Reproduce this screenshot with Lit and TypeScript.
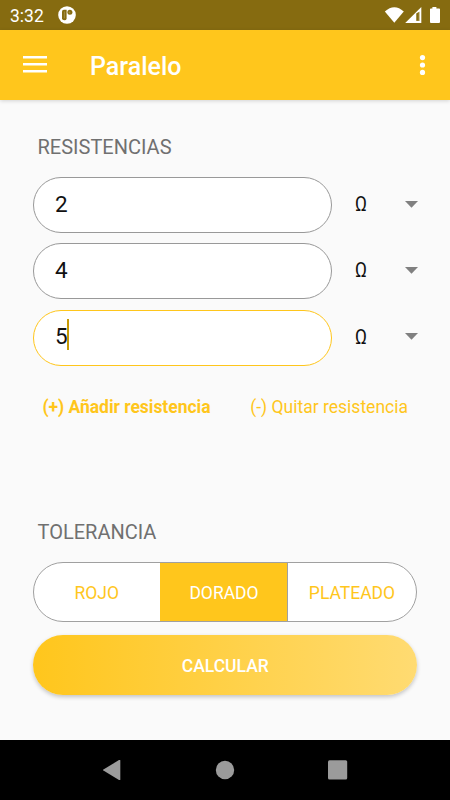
import { LitElement, html, css, svg } from "lit";
import { customElement, state } from "lit/decorators.js";
import { classMap } from "lit/directives/class-map.js";

@customElement("status-bar")
class StatusBar extends LitElement {
  static styles = css`
    :host {
      display: flex;
      align-items: center;
      height: 30px;
      background: #866b10;
      color: #fff;
      box-sizing: border-box;
      padding: 0 10px;
    }
    .clock {
      font: 400 17.5px/32px Roboto, sans-serif;
      width: 48px;
      height: 30px;
    }
    .spacer {
      flex: 1;
    }
    svg {
      display: block;
    }
  `;
  render() {
    return html`
      <span class="clock">3:32</span>
      <svg width="18" height="18" viewBox="0 0 18 18">
        <circle cx="9" cy="9" r="8.8" fill="#fff" />
        <path d="M4 5.6Q4 3.8 5.8 3.8H8.6V12.4Q8.6 14.3 6.3 14.3Q4 14.3 4 12.2Z" fill="#866b10" />
        <path d="M5.9 5.6H6.9V12.3H5.9Z" fill="#a18b45" />
        <circle cx="11.9" cy="6.3" r="2.5" fill="#866b10" />
        <circle cx="11.5" cy="6.4" r="0.9" fill="#a18b45" />
      </svg>
      <span class="spacer"></span>
      <svg width="56" height="18" viewBox="0 0 56 18">
        <path d="M0.8 5.6Q10.3 -3.2 19.8 5.6L10.3 16.8Z" fill="#fff" />
        <path d="M21.2 17L37.3 1V17Z" fill="#fff" />
        <path d="M32.2 7.4L35.9 5.4V15.1H32.2Z" fill="#c9bd93" />
        <path d="M32.4 7.4L34.8 6V14.7H32.4Z" fill="#866b10" />
        <path d="M48.4 1H52.4V2.4H55.2Q56 2.4 56 3.3V16Q56 17 55 17H47Q46 17 46 16V3.3Q46 2.4 46.9 2.4H48.4Z" fill="#fff" />
      </svg>
    `;
  }
}

@customElement("tool-bar")
class ToolBar extends LitElement {
  static styles = css`
    :host {
      display: flex;
      align-items: center;
      height: 70px;
      box-sizing: border-box;
      padding: 0 23px;
      background: #ffc61c;
      color: #fff;
      box-shadow: 0 1px 4px rgba(0, 0, 0, 0.16);
    }
    .title {
      flex: 1;
      margin: 4px 0 0 43px;
      font: 500 25px/30px Roboto, sans-serif;
    }
    svg {
      display: block;
    }
    .menu {
      margin-bottom: 1px;
    }
  `;
  render() {
    return html`
      <svg class="menu" width="24" height="17" viewBox="0 0 24 17">
        <path d="M0 0H24V2.6H0ZM0 7H24V9.6H0ZM0 14H24V16.6H0Z" fill="#fff" />
      </svg>
      <span class="title">Paralelo</span>
      <svg class="more" width="9" height="20" viewBox="0 0 9 20">
        <circle cx="4.5" cy="2.6" r="2.6" fill="#fff" />
        <circle cx="4.5" cy="10" r="2.6" fill="#fff" />
        <circle cx="4.5" cy="17.4" r="2.6" fill="#fff" />
      </svg>
    `;
  }
}

@customElement("nav-bar")
class NavBar extends LitElement {
  static styles = css`
    :host {
      display: grid;
      grid-template-columns: repeat(3, 112.5px);
      justify-content: center;
      align-items: center;
      justify-items: center;
      height: 60px;
      background: #000;
    }
    svg {
      display: block;
    }
  `;
  render() {
    const shapes = [
      svg`<path d="M0.4 9.4Q-0.5 10 0.4 10.6L16 19.9Q17.3 20.4 17.3 19.4V0.6Q17.3 -0.4 16 0.1Z" />`,
      svg`<circle cx="10" cy="10" r="9.2" />`,
      svg`<rect x="0" y="0.3" width="19.2" height="19.2" rx="1.5" />`,
    ];
    return shapes.map(
      (shape) => html`<svg width="20" height="20" viewBox="0 0 20 20" fill="#9b9b9b">${shape}</svg>`
    );
  }
}

@customElement("app-root")
class AppRoot extends LitElement {
  @state() values = ["2", "4", "5"];
  @state() focused = 2;
  @state() tolerance = "DORADO";

  static styles = css`
    :host {
      display: flex;
      flex-direction: column;
      width: 450px;
      height: 800px;
      background: #fafafa;
      font-family: Roboto, sans-serif;
      overflow: hidden;
    }
    main {
      flex: 1;
      display: flex;
      flex-direction: column;
      padding: 0 32.5px;
    }
    .label {
      font-size: 20px;
      line-height: 24px;
      color: #707070;
      padding-left: 5px;
    }
    .label.first {
      margin-top: 35px;
    }
    .label.second {
      margin-top: 103.5px;
    }
    .rows {
      display: grid;
      gap: 10.25px;
      margin-top: 18px;
    }
    .row {
      display: flex;
      align-items: center;
    }
    .field {
      box-sizing: border-box;
      width: 299.5px;
      height: 56px;
      border: 1.25px solid #999;
      border-radius: 28px;
      background: #fff;
      padding: 0 0 3px 21.5px;
      display: flex;
      align-items: center;
      font-size: 22.5px;
      color: #111;
    }
    .field.focused {
      border-color: #ffc61c;
    }
    .caret {
      width: 2px;
      height: 31px;
      margin-left: -0.5px;
      margin-top: -3px;
      background: #c79a06;
    }
    .unit {
      width: 50px;
      margin-left: 23px;
      font-size: 20px;
      line-height: 24px;
      padding-bottom: 2px;
      color: #111;
      transform: scaleX(0.9);
      transform-origin: 0 50%;
    }
    .arrow {
      display: block;
      margin-bottom: 2px;
    }
    .links {
      display: flex;
      justify-content: space-between;
      margin-top: 31px;
      padding: 0 9.5px 0 10px;
      font-size: 17.5px;
      line-height: 20px;
      color: #ffc61c;
    }
    .strong {
      font-weight: 700;
      letter-spacing: -0.03px;
    }
    .segments {
      display: grid;
      grid-template-columns: 126.5px 128px 1fr;
      box-sizing: border-box;
      width: 384.5px;
      height: 60px;
      margin-top: 18px;
      border: 1px solid #a0a0a0;
      border-radius: 30px;
      overflow: hidden;
      background: #fff;
    }
    .segment {
      display: flex;
      align-items: center;
      justify-content: center;
      font-size: 17.5px;
      color: #ffc61c;
      padding-top: 2px;
    }
    .segment.active {
      background: #ffc61c;
      color: #fff;
      border-right: 1px solid #a0a0a0;
      padding-left: 1px;
    }
    .submit {
      display: flex;
      align-items: center;
      justify-content: center;
      box-sizing: border-box;
      width: 384.5px;
      height: 60px;
      padding: 2px 0 0 1px;
      margin-top: 13px;
      border-radius: 30px;
      background: linear-gradient(90deg, #ffc61c, #ffdb72);
      color: #fff;
      font-size: 17.5px;
      font-weight: 500;
      box-shadow: 0 2px 4px rgba(0, 0, 0, 0.22);
    }
  `;

  render() {
    return html`
      <status-bar></status-bar>
      <tool-bar></tool-bar>
      <main>
        <div class="label first">RESISTENCIAS</div>
        <div class="rows">
          ${this.values.map(
            (value, i) => html`
              <div class="row">
                <div class=${classMap({ field: true, focused: i === this.focused })}>
                  <span>${value}</span>
                  ${i === this.focused ? html`<span class="caret"></span>` : ""}
                </div>
                <span class="unit">Ω</span>
                <svg class="arrow" width="13" height="7" viewBox="0 0 13 7">
                  <path d="M0 0H13L6.5 6.7Z" fill="#808080" />
                </svg>
              </div>
            `
          )}
        </div>
        <div class="links">
          <span class="strong">(+) Añadir resistencia</span>
          <span>(-) Quitar resistencia</span>
        </div>
        <div class="label second">TOLERANCIA</div>
        <div class="segments">
          ${["ROJO", "DORADO", "PLATEADO"].map(
            (name) => html`
              <div
                class=${classMap({ segment: true, active: name === this.tolerance })}
                @click=${() => (this.tolerance = name)}
              >
                ${name}
              </div>
            `
          )}
        </div>
        <div class="submit">CALCULAR</div>
      </main>
      <nav-bar></nav-bar>
    `;
  }
}
